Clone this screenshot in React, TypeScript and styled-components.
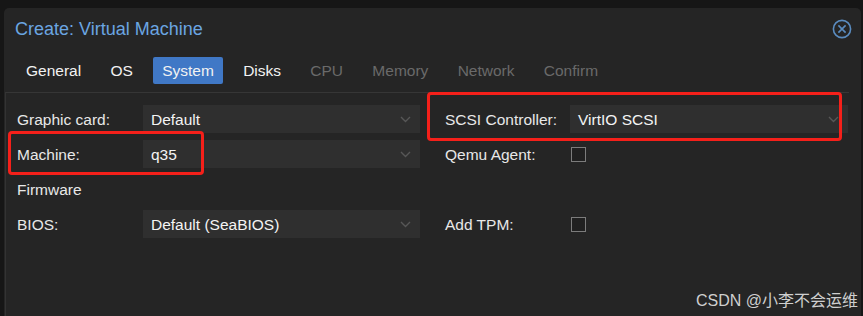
import styled, { createGlobalStyle } from "styled-components"

const GlobalStyle = createGlobalStyle`
  html, body {
    margin: 0;
    padding: 0;
    background: #161616;
    font-family: "Liberation Sans", Arial, sans-serif;
  }
  * {
    box-sizing: border-box;
  }
`

const Page = styled.div`
  height: 316px;
  overflow: hidden;
  display: flex;
  padding: 8px 2px 0 4px;
`

const Window = styled.div`
  position: relative;
  flex: 1;
  display: flex;
  flex-direction: column;
  background: #252525;
  border-radius: 5px 5px 0 0;
`

const TitleBar = styled.div`
  height: 40px;
  display: flex;
  align-items: center;
  justify-content: space-between;
  padding: 2px 9px 0 11px;
`

const Title = styled.h1`
  margin: 0;
  font-size: 18px;
  font-weight: normal;
  color: #6ba6e2;
`

const TabBar = styled.div`
  display: flex;
  gap: 11.3px;
  padding: 9px 0 0 13px;
  height: 36px;
  margin-bottom: 8px;
`

const Tab = styled.div<{ $active?: boolean; $disabled?: boolean }>`
  display: flex;
  align-items: center;
  padding: 1px 9px 0;
  border-radius: 2px;
  font-size: 15.5px;
  background: ${p => (p.$active ? "#4078c6" : "transparent")};
  color: ${p => (p.$disabled ? "#6a6a6a" : "#f2f2f2")};
`

const Panel = styled.div`
  flex: 1;
  margin: 0 12px 0 1px;
  border-top: 1px solid #363636;
  border-left: 1px solid #333;
  padding: 12px 0 0 11px;
`

const Form = styled.div`
  display: grid;
  grid-template-columns: 403px 403px;
  column-gap: 25px;
`

const Column = styled.div`
  display: flex;
  flex-direction: column;
  gap: 7px;
`

const Row = styled.div`
  position: relative;
  height: 28px;
  display: flex;
  align-items: center;
`

const Label = styled.div<{ $width: number }>`
  width: ${p => p.$width}px;
  flex-shrink: 0;
  padding-top: 1px;
  font-size: 15.5px;
  color: #e8e8e8;
`

const Section = styled.div`
  padding-top: 1px;
  font-size: 15.5px;
  color: #e8e8e8;
`

const Select = styled.div`
  flex: 1;
  height: 28px;
  display: flex;
  align-items: center;
  justify-content: space-between;
  padding: 1px 9px 0 8px;
  background: #2f2f2f;
  font-size: 15.5px;
  color: #f4f4f4;
`

const Check = styled.div`
  width: 15px;
  height: 15px;
  border: 1.5px solid #7c7c7c;
  background: #202020;
  margin: 1px 0 0 1px;
`

const Mark = styled.div<{ $t: number; $r: number; $b: number; $l: number }>`
  position: absolute;
  top: ${p => p.$t}px;
  right: ${p => p.$r}px;
  bottom: ${p => p.$b}px;
  left: ${p => p.$l}px;
  border: 3px solid #f5201a;
  border-radius: 4px;
  pointer-events: none;
`

const Watermark = styled.div`
  position: absolute;
  right: 3px;
  bottom: 5px;
  font-size: 16px;
  color: #cfcfcf;
  font-family: "Liberation Sans", "Noto Sans CJK SC", sans-serif;
`

const Chevron = () => (
  <svg width="11" height="7" viewBox="0 0 11 7">
    <path d="M1 1 L5.5 5.5 L10 1" fill="none" stroke="#575757" strokeWidth="1.4" />
  </svg>
)

const CloseIcon = () => (
  <svg width="20" height="20" viewBox="0 0 20 20">
    <circle cx="10" cy="10" r="8.6" fill="none" stroke="#5a8cc0" strokeWidth="1.6" />
    <path d="M6.4 6.4 L13.6 13.6 M13.6 6.4 L6.4 13.6" stroke="#5a8cc0" strokeWidth="1.6" />
  </svg>
)

const tabs = [
  { name: "General" },
  { name: "OS" },
  { name: "System", active: true },
  { name: "Disks" },
  { name: "CPU", disabled: true },
  { name: "Memory", disabled: true },
  { name: "Network", disabled: true },
  { name: "Confirm", disabled: true },
]

const Field = ({ label, value, width = 126 }: { label: string; value: string; width?: number }) => (
  <>
    <Label $width={width}>{label}</Label>
    <Select>
      <span>{value}</span>
      <Chevron />
    </Select>
  </>
)

const App = () => {
  return (
    <>
      <GlobalStyle />
      <Page>
        <Window>
          <TitleBar>
            <Title>Create: Virtual Machine</Title>
            <CloseIcon />
          </TitleBar>
          <TabBar>
            {tabs.map(t => (
              <Tab key={t.name} $active={t.active} $disabled={t.disabled}>{t.name}</Tab>
            ))}
          </TabBar>
          <Panel>
            <Form>
              <Column>
                <Row><Field label="Graphic card:" value="Default" /></Row>
                <Row>
                  <Field label="Machine:" value="q35" />
                  <Mark $t={-9} $r={216} $b={-7} $l={-9} />
                </Row>
                <Row><Section>Firmware</Section></Row>
                <Row><Field label="BIOS:" value="Default (SeaBIOS)" /></Row>
              </Column>
              <Column>
                <Row>
                  <Field label="SCSI Controller:" value="VirtIO SCSI" width={125} />
                  <Mark $t={-13} $r={6} $b={-8} $l={-18} />
                </Row>
                <Row>
                  <Label $width={125}>Qemu Agent:</Label>
                  <Check />
                </Row>
                <Row />
                <Row>
                  <Label $width={125}>Add TPM:</Label>
                  <Check />
                </Row>
              </Column>
            </Form>
          </Panel>
          <Watermark>CSDN @小李不会运维</Watermark>
        </Window>
      </Page>
    </>
  )
}

export default App
